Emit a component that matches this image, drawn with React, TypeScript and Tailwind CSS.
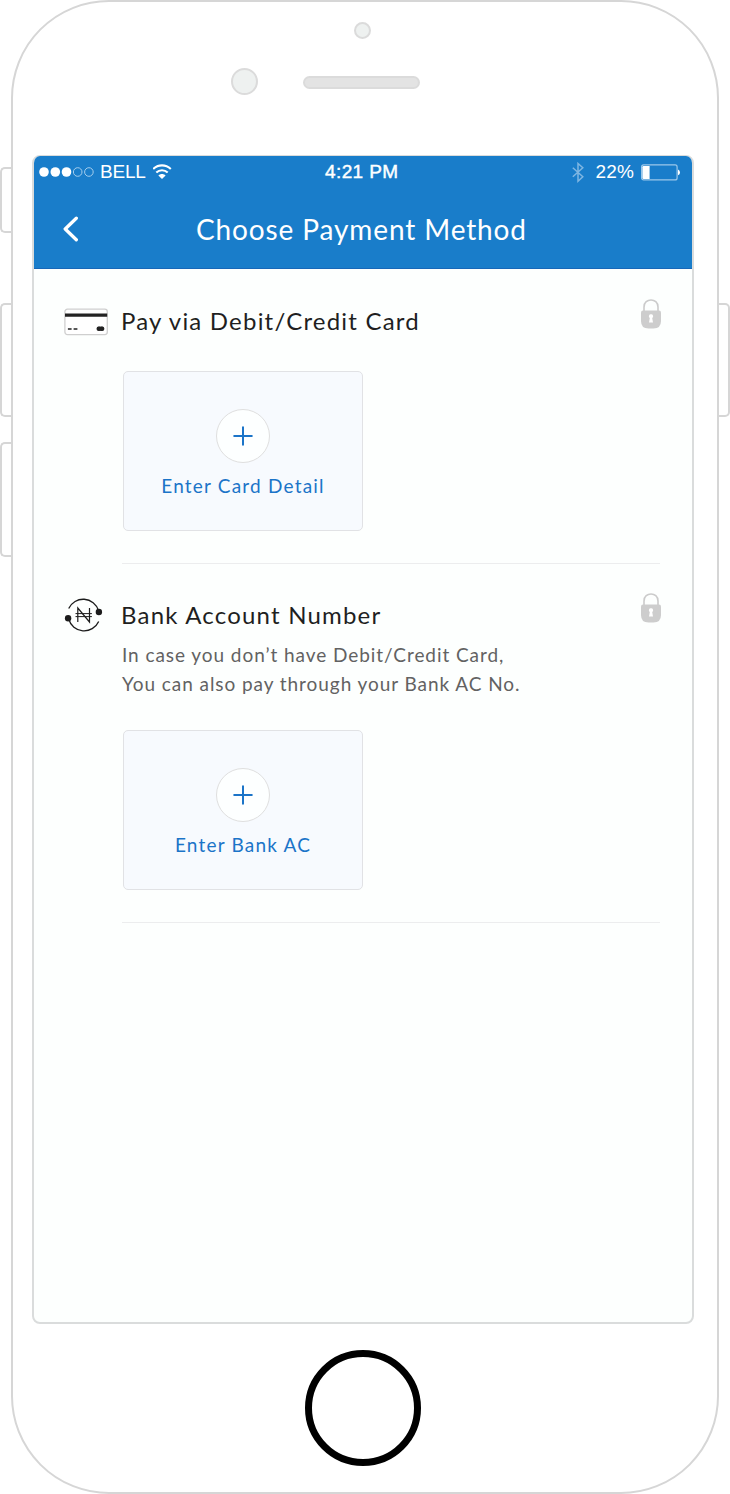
import type { ReactNode } from "react";

function SideButton({ className = "" }: { className?: string }) {
  return <div className={`w-[11px] shrink-0 border-2 border-[#d6d6d6] bg-white ${className}`} />;
}

function StatusBar() {
  return (
    <div className="flex h-[32px] items-center pl-[5px] pr-[12px] font-['Liberation_Sans',sans-serif] text-[19px] leading-[32px] text-white">
      <div className="flex w-[286px] items-center">
        <svg width="56" height="12" viewBox="0 0 56 12" fill="none">
          <circle cx="5" cy="6" r="4.8" fill="#fff" />
          <circle cx="16.3" cy="6" r="4.8" fill="#fff" />
          <circle cx="27.5" cy="6" r="4.8" fill="#fff" />
          <circle cx="38.7" cy="6" r="4.3" stroke="#a5cdec" strokeWidth="1" />
          <circle cx="49.9" cy="6" r="4.3" stroke="#a5cdec" strokeWidth="1" />
        </svg>
        <span className="ml-[5px] tracking-[-0.2px]">BELL</span>
        <svg className="ml-[7px]" width="20" height="16" viewBox="0 0 20 16" fill="none" stroke="#fff" strokeWidth="2.1">
          <path d="M.2 5C5.4 .2 12.6 .2 17.8 5" />
          <path d="M3.3 8.5C6.5 5.5 11.5 5.5 14.7 8.5" />
          <path d="M9 15 5.4 11.5C7.4 9.5 10.6 9.5 12.6 11.5Z" fill="#fff" stroke="none" />
        </svg>
      </div>
      <span className="tracking-[0.4px] [-webkit-text-stroke:0.45px_white]">4:21 PM</span>
      <div className="ml-auto flex items-center">
        <svg width="12" height="21" viewBox="0 0 12 21" fill="none" stroke="#7fb6e2" strokeWidth="1.5">
          <path d="M.8 5.8 10.8 14.8 6 19.2V1.5L10.8 5.8.8 14.8" />
        </svg>
        <span className="ml-[12px] tracking-[0.15px]">22%</span>
        <svg className="ml-[7px]" width="39" height="17" viewBox="0 0 39 17" fill="none">
          <rect x=".6" y=".9" width="35.5" height="15" rx="2" stroke="#9cc8ea" strokeWidth="1.2" />
          <path d="M2.5 2H8.6V15H2.5Q1.4 15 1.4 13.8V3.2Q1.4 2 2.5 2Z" fill="#fff" />
          <path d="M37 5.5Q39 6.4 39 8.4T37 11.3Z" fill="#fff" />
        </svg>
      </div>
    </div>
  );
}

function Lock() {
  return (
    <svg width="20" height="30" viewBox="0 0 20 30" fill="none">
      <path d="M3 12V8C3 -1.4 17 -1.4 17 8V12" stroke="#cbcbcb" strokeWidth="1.6" />
      <path d="M2 11.5H18Q20 11.5 20 13.5V22Q20 29.5 12.5 29.5H7.5Q0 29.5 0 22V13.5Q0 11.5 2 11.5Z" fill="#cdcdcd" />
      <path d="M10 15.3A2 2 0 0 1 11.2 19L12 23.5H8L8.8 19A2 2 0 0 1 10 15.3Z" fill="#fff" />
    </svg>
  );
}

function CardIcon() {
  return (
    <svg className="mt-px" width="44" height="28" viewBox="0 0 44 28">
      <rect x=".9" y="1.2" width="42.4" height="25.4" rx="2.5" fill="#fff" stroke="#cfcfcf" strokeWidth="1.3" />
      <path d="M1 5.6H43.2V8.8H1Z" fill="#222" />
      <path d="M3.9 20.2H7.6V21.8H3.9ZM9.6 20.2H13.4V21.8H9.6Z" fill="#222" />
      <circle cx="34.8" cy="20.7" r="2.3" fill="#222" />
      <circle cx="38.1" cy="20.7" r="2.3" fill="#222" />
      <path d="M34.5 18.6H38.5V22.8H34.5Z" fill="#222" />
    </svg>
  );
}

function NairaIcon() {
  return (
    <svg width="40" height="34" viewBox="-.5 0 40 34" fill="none" stroke="#1c1c1c">
      <path d="M4.2 10.5A16 16 0 0 1 34 12.5" strokeWidth="1.3" />
      <path d="M34.2 23.5A16 16 0 0 1 4.2 21" strokeWidth="1.3" />
      <circle cx="34.4" cy="14" r="3.2" fill="#1c1c1c" stroke="none" />
      <circle cx="3.6" cy="20.3" r="3.2" fill="#1c1c1c" stroke="none" />
      <path d="M13.3 24V10L25 24V10" strokeWidth="1.2" />
      <path d="M11 15.6H27.4M11 18.6H27.4" strokeWidth="1" />
    </svg>
  );
}

function Method({
  icon, title, description, action, top,
}: { icon: ReactNode; title: string; description?: ReactNode; action: string; top: string }) {
  return (
    <section className={`flex items-start ${top}`}>
      <div className="flex h-[32px] w-[57px] shrink-0 items-center">{icon}</div>
      <div className="min-w-0 grow">
        <div className="flex h-[32px] items-start justify-between">
          <h2 className="whitespace-nowrap text-[24px] leading-[32px] tracking-[1.2px] text-[#1f1f1f]">{title}</h2>
          <div className="-mt-[6px] mr-[-1px]"><Lock /></div>
        </div>
        {description && (
          <p className="mt-[9px] -mb-[2px] whitespace-nowrap pl-px text-[19px] leading-[29px] tracking-[0.94px] text-[#626262]">{description}</p>
        )}
        <button className="mt-[34px] ml-[2px] flex h-[160px] w-[240px] flex-col items-center rounded-[5px] border border-[#e1e2e5] bg-[#f7fafe] pt-[37px]">
          <span className="flex size-[54px] items-center justify-center rounded-full border border-[#dfdfdf] bg-[#fdffff]">
            <svg width="20" height="20" viewBox="0 0 20 20" stroke="#1b74c8" strokeWidth="2" strokeLinecap="round">
              <path d="M10 1.2V18.8M1.2 10H18.8" />
            </svg>
          </span>
          <span className="mt-[9px] whitespace-nowrap text-[19px] leading-[28px] tracking-[1.2px] text-[#1b74c8]">{action}</span>
        </button>
        <div className="mt-[32px] ml-[1px] h-px bg-[#ecedee]" />
      </div>
    </section>
  );
}

export default function App() {
  return (
    <div className="flex h-[1494px] w-[730px] overflow-hidden bg-white font-['Lato',sans-serif]">
      <div className="flex w-[11px] shrink-0 flex-col pt-[167px]">
        <SideButton className="h-[66px] rounded-l-[5px] border-r-0" />
        <SideButton className="mt-[70px] h-[114px] rounded-l-[5px] border-r-0" />
        <SideButton className="mt-[25px] h-[115px] rounded-l-[5px] border-r-0" />
      </div>

      <div className="flex h-[1494px] w-[708px] shrink-0 flex-col rounded-[98px] border-2 border-[#d6d6d6] bg-white">
        <div className="h-[153px] shrink-0 pt-[20px]">
          <div className="ml-[341px] size-[17px] rounded-full border-2 border-[#dbdbdb] bg-[#eef1f0]" />
          <div className="mt-[29px] ml-[218px] flex items-center">
            <div className="size-[27px] rounded-full border-2 border-[#dbdbdb] bg-[#eef1f0]" />
            <div className="mt-[2px] ml-[45px] h-[13px] w-[117px] rounded-full border-2 border-[#dbdbdb] bg-[#e3e3e3]" />
          </div>
        </div>

        <main className="ml-[19px] flex h-[1169px] w-[662px] shrink-0 flex-col overflow-hidden rounded-[8px] border-x-2 border-t border-b-2 border-[#dadcdc] bg-[#fdfffe]">
          <header className="h-[113px] shrink-0 border-b border-[#1767b8] bg-[#197dca]">
            <StatusBar />
            <div className="flex h-[82px] items-center pl-[28px]">
              <svg width="18" height="26" viewBox="0 0 18 26" fill="none" stroke="#fff" strokeWidth="3.3" strokeLinecap="round" strokeLinejoin="round">
                <path d="M14.3 2.2 3.2 13 14.3 23.8" />
              </svg>
              <h1 className="ml-[116px] whitespace-nowrap text-[28px] leading-[36px] tracking-[0.88px] text-white">Choose Payment Method</h1>
            </div>
          </header>
          <div className="pl-[30px] pr-[32px]">
            <Method top="mt-[36px]" icon={<CardIcon />} title="Pay via Debit/Credit Card" action="Enter Card Detail" />
            <Method
              top="mt-[35px]"
              icon={<NairaIcon />}
              title="Bank Account Number"
              description={<>In case you don’t have Debit/Credit Card,<br />You can also pay through your Bank AC No.</>}
              action="Enter Bank AC"
            />
          </div>
        </main>

        <div className="mt-[26px] ml-[292px] size-[116px] shrink-0 rounded-full border-[7px] border-black" />
      </div>

      <div className="flex w-[11px] shrink-0 flex-col pt-[303px]">
        <SideButton className="h-[114px] rounded-r-[5px] border-l-0" />
      </div>
    </div>
  );
}
